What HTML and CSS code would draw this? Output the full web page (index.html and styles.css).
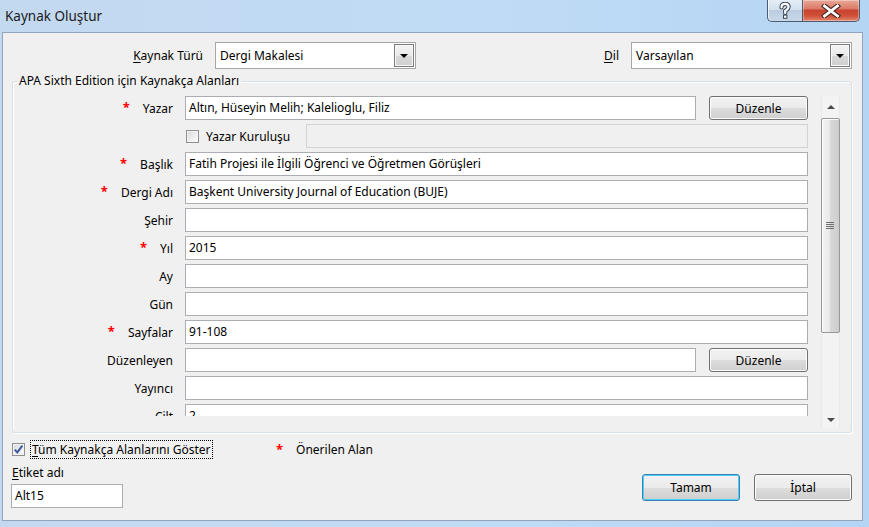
FILE: index.html
```
<!DOCTYPE html>
<html lang="tr">
<head>
<meta charset="utf-8">
<title>Kaynak Oluştur</title>
<link rel="stylesheet" href="styles.css">
</head>
<body>
<div class="window">
  <div class="titlebar">
    <span class="title">Kaynak Oluştur</span>
    <div class="caption">
      <div class="cbtn help">
        <svg width="14" height="18" viewBox="0 0 14 18">
          <path d="M3.5 5.5 C3.5 2.8 5 1.8 7 1.8 C9.3 1.8 10.6 3.2 10.6 5 C10.6 7 8.8 7.6 7.2 8.8 L7.2 11" fill="none" stroke="#3a4656" stroke-width="4.2" stroke-linecap="round"/>
          <path d="M3.5 5.5 C3.5 2.8 5 1.8 7 1.8 C9.3 1.8 10.6 3.2 10.6 5 C10.6 7 8.8 7.6 7.2 8.8 L7.2 11" fill="none" stroke="#fff" stroke-width="2.2" stroke-linecap="round"/>
          <rect x="5" y="12.6" width="4.4" height="4.2" fill="#3a4656"/>
          <rect x="6" y="13.6" width="2.4" height="2.2" fill="#fff"/>
        </svg>
      </div>
      <div class="cbtn close">
        <svg width="20" height="14" viewBox="0 0 20 14">
          <path d="M3.5 2 L16.5 12 M16.5 2 L3.5 12" stroke="#4a2b26" stroke-width="5" stroke-linecap="square"/>
          <path d="M3.5 2 L16.5 12 M16.5 2 L3.5 12" stroke="#fff" stroke-width="2.8" stroke-linecap="square"/>
        </svg>
      </div>
    </div>
  </div>

  <div class="client">
    <div class="toprow">
      <span class="toplabel"><u>K</u>aynak Türü</span>
      <div class="combo combo-type">
        <span class="combo-text">Dergi Makalesi</span>
        <span class="combo-btn"><span class="tri-down"></span></span>
      </div>
      <span class="toplabel-dil"><u>D</u>il</span>
      <div class="combo combo-lang">
        <span class="combo-text">Varsayılan</span>
        <span class="combo-btn"><span class="tri-down"></span></span>
      </div>
    </div>

    <fieldset class="group">
      <legend>APA Sixth Edition için Kaynakça Alanları</legend>
      <div class="group-body">
        <div class="fields">
          <div class="row">
            <span class="lbl"><span class="star">*</span>Yazar</span>
            <span class="inp short">Altın, Hüseyin Melih; Kalelioglu, Filiz</span>
            <span class="btn">Düzenle</span>
          </div>
          <div class="row">
            <span class="lbl"></span>
            <span class="chk"></span>
            <span class="chk-label">Yazar Kuruluşu</span>
            <span class="inp dis"></span>
          </div>
          <div class="row">
            <span class="lbl"><span class="star">*</span>Başlık</span>
            <span class="inp">Fatih Projesi ile İlgili Öğrenci ve Öğretmen Görüşleri</span>
          </div>
          <div class="row">
            <span class="lbl"><span class="star">*</span>Dergi Adı</span>
            <span class="inp">Başkent University Journal of Education (BUJE)</span>
          </div>
          <div class="row">
            <span class="lbl">Şehir</span>
            <span class="inp"></span>
          </div>
          <div class="row">
            <span class="lbl"><span class="star">*</span>Yıl</span>
            <span class="inp">2015</span>
          </div>
          <div class="row">
            <span class="lbl">Ay</span>
            <span class="inp"></span>
          </div>
          <div class="row">
            <span class="lbl">Gün</span>
            <span class="inp"></span>
          </div>
          <div class="row">
            <span class="lbl"><span class="star">*</span>Sayfalar</span>
            <span class="inp">91-108</span>
          </div>
          <div class="row">
            <span class="lbl">Düzenleyen</span>
            <span class="inp short"></span>
            <span class="btn">Düzenle</span>
          </div>
          <div class="row">
            <span class="lbl">Yayıncı</span>
            <span class="inp"></span>
          </div>
          <div class="row">
            <span class="lbl">Cilt</span>
            <span class="inp">2</span>
          </div>
        </div>
        <div class="vscroll">
          <div class="sb-up"><span class="tri-up"></span></div>
          <div class="thumb">
            <svg width="9" height="9" viewBox="0 0 9 9">
              <path d="M0 1.5 H8 M0 3.5 H8 M0 5.5 H8 M0 7.5 H8" stroke="#6e6e6e" stroke-width="1"/>
            </svg>
          </div>
          <div class="sb-space"></div>
          <div class="sb-down"><span class="tri-down small"></span></div>
        </div>
      </div>
    </fieldset>

    <div class="bottom">
      <div class="showrow">
        <div class="cbgroup">
          <span class="chk checked">
            <svg width="11" height="11" viewBox="0 0 11 11">
              <path d="M1.8 5.6 L4.3 8.4 L9.4 1.6" fill="none" stroke="#3d5a9c" stroke-width="2"/>
            </svg>
          </span>
          <span class="focus-label"><u>T</u>üm Kaynakça Alanlarını Göster</span>
        </div>
        <span class="star">*</span>
        <span class="legend-text">Önerilen Alan</span>
      </div>
      <div class="lastrow">
        <div class="etiket">
          <div class="etiket-label"><u>E</u>tiket adı</div>
          <div class="inp etiket-inp">Alt15</div>
        </div>
        <div class="buttons">
          <span class="pbtn default">Tamam</span>
          <span class="pbtn">İptal</span>
        </div>
      </div>
    </div>
  </div>
</div>
</body>
</html>
```
FILE: styles.css
```
* { box-sizing: border-box; }
html, body { margin: 0; padding: 0; }
body {
  width: 869px;
  height: 527px;
  overflow: hidden;
  font-family: "Noto Sans", "Open Sans", sans-serif;
  font-size: 12px;
  color: #000;
}
u { text-decoration: underline; text-underline-offset: 2px; }

.window {
  width: 869px;
  height: 527px;
  background: linear-gradient(to right, #c3d9f0, #c0dbf5 55%, #b5d5f4);
  display: flex;
  flex-direction: column;
}

/* title bar */
.titlebar {
  height: 32px;
  flex: none;
  display: flex;
  justify-content: space-between;
  align-items: flex-start;
  padding-left: 5px;
}
.title {
  font-size: 13.5px;
  line-height: 20px;
  margin-top: 6px;
  color: #1b1b1b;
}
.caption { display: flex; margin-right: 9px; }
.cbtn {
  height: 22px;
  border: 1px solid #4d5b6e;
  border-top: none;
  display: flex;
  align-items: center;
  justify-content: center;
}
.help {
  width: 35px;
  border-right: none;
  border-radius: 0 0 0 5px;
  background: linear-gradient(#e4edf7, #d3e0ee 45%, #bccde1 50%, #c8d8ea);
  box-shadow: inset 1px 0 0 rgba(255,255,255,.7);
}
.close {
  width: 58px;
  border-radius: 0 0 5px 0;
  background: linear-gradient(#eaa899, #dc7c69 40%, #c8442f 50%, #cf5138 75%, #e3866a);
  box-shadow: inset 0 0 0 1px rgba(255,255,255,.35);
}

/* client area */
.client {
  margin-left: 2px;
  width: 861px;
  height: 489px;
  flex: none;
  border: 1px solid #93a5ba;
  background: #f0f0f0;
  display: flex;
  flex-direction: column;
}

.toprow {
  display: flex;
  align-items: center;
  height: 27px;
  margin-top: 9px;
  padding-right: 10px;
  flex: none;
}
.toplabel {
  width: 200px;
  text-align: right;
  margin-right: 12px;
}
.toplabel-dil { margin-left: auto; margin-right: 12px; }
.combo {
  height: 27px;
  border: 1px solid #a7a7a7;
  background: #fff;
  display: flex;
  align-items: stretch;
  padding: 1px;
}
.combo-type { width: 201px; }
.combo-lang { width: 221px; }
.combo-text {
  flex: 1;
  padding-left: 3px;
  line-height: 23px;
}
.combo-btn {
  width: 20px;
  border: 1px solid #7b7b7b;
  background: linear-gradient(#f4f4f4, #e9e9e9 50%, #d9d9d9 51%, #d0d0d0);
  display: flex;
  align-items: center;
  justify-content: center;
  box-shadow: inset 0 0 0 1px #f8f8f8;
}
.tri-down {
  width: 0; height: 0;
  border-left: 4px solid transparent;
  border-right: 4px solid transparent;
  border-top: 4px solid #000;
}
.tri-down.small { border-top-color: #4a4a4a; }
.tri-up {
  width: 0; height: 0;
  border-left: 4px solid transparent;
  border-right: 4px solid transparent;
  border-bottom: 4px solid #4a4a4a;
}

/* group box */
.group {
  margin: 4px 0 0 9px;
  width: 840px;
  min-width: 0;
  padding: 7px 11px 4px 0;
  border: 1px solid #d5dfe5;
  border-radius: 3px;
  box-shadow: inset 1px 1px 0 #fff, 1px 1px 0 #fff;
  flex: none;
}
.group legend {
  margin-left: 4px;
  padding: 0 2px;
  line-height: 16px;
}
.group-body { display: flex; align-items: flex-start; }
.fields {
  width: 808px;
  height: 320px;
  padding-right: 13px;
  overflow: hidden;
  flex: none;
}
.row {
  display: flex;
  align-items: center;
  height: 24px;
  margin-bottom: 4px;
}
.lbl {
  width: 160px;
  flex: none;
  display: flex;
  justify-content: flex-end;
  align-items: center;
  margin-right: 12px;
  white-space: nowrap;
}
.star {
  color: #f00;
  font-weight: bold;
  font-size: 13px;
  margin-right: 13px;
  position: relative;
  top: -1px;
}
.inp {
  width: 623px;
  height: 24px;
  flex: none;
  border: 1px solid #abadb3;
  background: #fff;
  padding: 0 3px;
  line-height: 22px;
  white-space: nowrap;
  overflow: hidden;
}
.inp.short { width: 511px; }
.inp.dis {
  width: 502px;
  margin-left: auto;
  background: #f0f0f0;
  border-color: #d3d3d3;
}
.btn {
  width: 99px;
  height: 24px;
  margin-left: 13px;
  flex: none;
  border: 1px solid #707070;
  border-radius: 3px;
  background: linear-gradient(#f2f2f2, #ebebeb 50%, #dddddd 51%, #cfcfcf);
  box-shadow: inset 0 0 0 1px #fbfbfb;
  display: flex;
  align-items: center;
  justify-content: center;
}
.chk {
  width: 13px;
  height: 13px;
  flex: none;
  margin-left: 1px;
  border: 1px solid #8e8f8f;
  background: linear-gradient(135deg, #d8d8d8, #f6f6f6 80%);
  box-shadow: inset 0 0 0 1px #f4f4f4;
  display: flex;
  align-items: center;
  justify-content: center;
}
.chk-label { margin-left: 7px; }

/* scrollbar */
.vscroll {
  width: 19px;
  height: 332px;
  flex: none;
  display: flex;
  flex-direction: column;
  align-items: stretch;
  background: #f3f3f3;
  border-left: 1px solid #e9e9e9;
  border-right: 1px solid #e9e9e9;
}
.sb-up {
  height: 21px;
  display: flex;
  align-items: center;
  justify-content: center;
  flex: none;
}
.thumb {
  height: 215px;
  margin: 1px -1px 0 -1px;
  flex: none;
  border: 1px solid #979797;
  border-radius: 2px;
  background: linear-gradient(to right, #f4f4f4, #e9e9e9 45%, #d8d8d8 50%, #cdcdcd);
  box-shadow: inset 1px 1px 0 #fcfcfc;
  display: flex;
  align-items: center;
  justify-content: center;
}
.sb-space { flex: 1; }
.sb-down {
  height: 17px;
  flex: none;
  display: flex;
  align-items: center;
  justify-content: center;
}

/* bottom */
.bottom {
  padding: 7px 10px 0 9px;
  flex: none;
}
.showrow {
  display: flex;
  align-items: center;
  height: 19px;
}
.cbgroup {
  width: 264px;
  display: flex;
  align-items: center;
  flex: none;
}
.chk.checked { margin-left: 0; }
.focus-label {
  margin-left: 5px;
  padding: 0 1px;
  border: 1px dotted #000;
  line-height: 17px;
}
.lastrow {
  display: flex;
  align-items: flex-start;
  margin-top: 6px;
}
.etiket-label { line-height: 16px; }
.etiket-inp {
  width: 112px;
  margin-top: 3px;
  margin-left: -1px;
}
.buttons {
  margin-left: auto;
  margin-top: 9px;
  display: flex;
  gap: 14px;
}
.pbtn {
  width: 98px;
  height: 27px;
  border: 1px solid #707070;
  border-radius: 3px;
  background: linear-gradient(#f2f2f2, #ebebeb 50%, #dddddd 51%, #cfcfcf);
  box-shadow: inset 0 0 0 1px #fbfbfb;
  display: flex;
  align-items: center;
  justify-content: center;
}
.pbtn.default {
  border-color: #3c7fb1;
  background: linear-gradient(#f2f2f2, #ebebeb 50%, #dddddd 51%, #cfcfcf);
  box-shadow: inset 0 0 0 1px #48d0fb;
}
```
